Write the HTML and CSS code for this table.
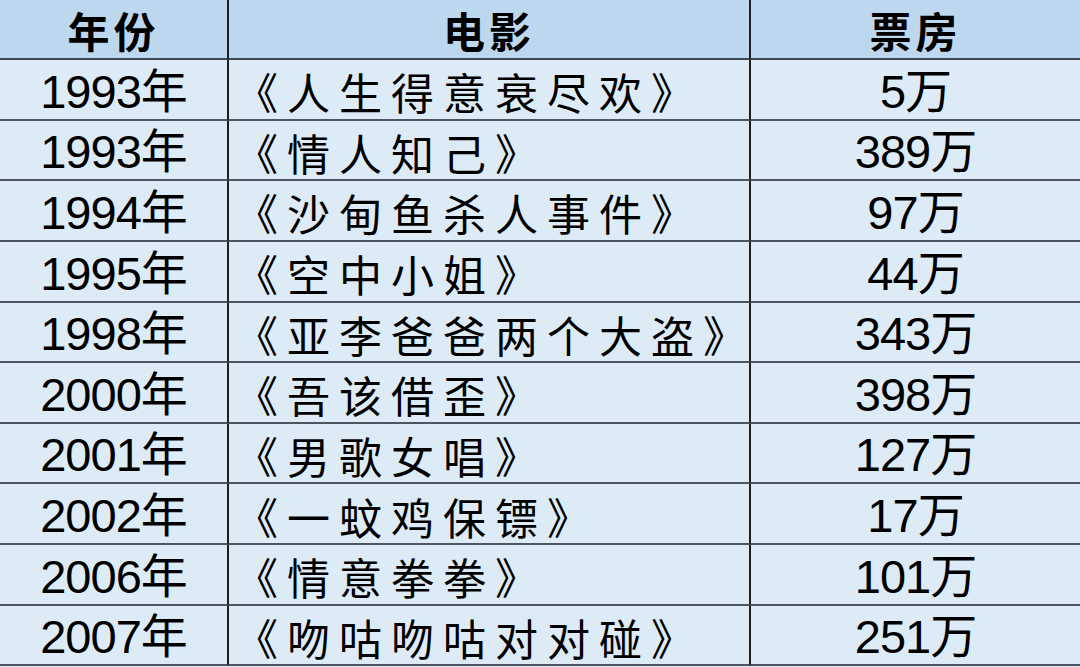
FILE: index.html
```html
<!DOCTYPE html>
<html lang="zh-CN">
<head>
<meta charset="utf-8">
<title>票房</title>
<link rel="stylesheet" href="styles.css">
</head>
<body>
<div class="table">
  <div class="cell head c1">年份</div>
  <div class="cell head c2">电影</div>
  <div class="cell head c3">票房</div>

  <div class="cell c1">1993年</div>
  <div class="cell c2">《人生得意衰尽欢》</div>
  <div class="cell c3">5万</div>

  <div class="cell c1">1993年</div>
  <div class="cell c2">《情人知己》</div>
  <div class="cell c3">389万</div>

  <div class="cell c1">1994年</div>
  <div class="cell c2">《沙甸鱼杀人事件》</div>
  <div class="cell c3">97万</div>

  <div class="cell c1">1995年</div>
  <div class="cell c2">《空中小姐》</div>
  <div class="cell c3">44万</div>

  <div class="cell c1">1998年</div>
  <div class="cell c2">《亚李爸爸两个大盗》</div>
  <div class="cell c3">343万</div>

  <div class="cell c1">2000年</div>
  <div class="cell c2">《吾该借歪》</div>
  <div class="cell c3">398万</div>

  <div class="cell c1">2001年</div>
  <div class="cell c2">《男歌女唱》</div>
  <div class="cell c3">127万</div>

  <div class="cell c1">2002年</div>
  <div class="cell c2">《一蚊鸡保镖》</div>
  <div class="cell c3">17万</div>

  <div class="cell c1">2006年</div>
  <div class="cell c2">《情意拳拳》</div>
  <div class="cell c3">101万</div>

  <div class="cell c1">2007年</div>
  <div class="cell c2">《吻咕吻咕对对碰》</div>
  <div class="cell c3">251万</div>
</div>
</body>
</html>
```

FILE: styles.css
```css
html, body {
  margin: 0;
  padding: 0;
  background: #ddebf7;
}

.table {
  display: grid;
  grid-template-columns: 229px 522px 329px;
  grid-template-rows: 60px repeat(10, 60.65px);
  width: 1080px;
  height: 667px;
  overflow: hidden;
  font-family: "Liberation Sans", "Noto Sans CJK SC", sans-serif;
  color: #000;
  background: #ddebf7;
}

.cell {
  box-sizing: border-box;
  display: flex;
  align-items: center;
  justify-content: center;
  border-bottom: 2px solid #4d5660;
  font-size: 47px;
  letter-spacing: -1px;
  line-height: 1.2;
  white-space: nowrap;
  background: #ddebf7;
  padding-top: 5px;
}

.head {
  background: #bdd7ee;
  font-family: "Noto Sans CJK SC", sans-serif;
  font-weight: 700;
  font-size: 42px;
  letter-spacing: 4px;
  padding-top: 3px;
  border-bottom-color: #3f4852;
}

.c1, .c2 {
  border-right: 2px solid #1e1e1e;
}

.c2 {
  justify-content: flex-start;
  padding-left: 6px;
  font-family: "Noto Sans CJK SC", sans-serif;
  font-size: 43px;
  letter-spacing: 9px;
}

.c2.head {
  justify-content: center;
  padding-left: 0;
  font-size: 42px;
  letter-spacing: 4px;
}
```
